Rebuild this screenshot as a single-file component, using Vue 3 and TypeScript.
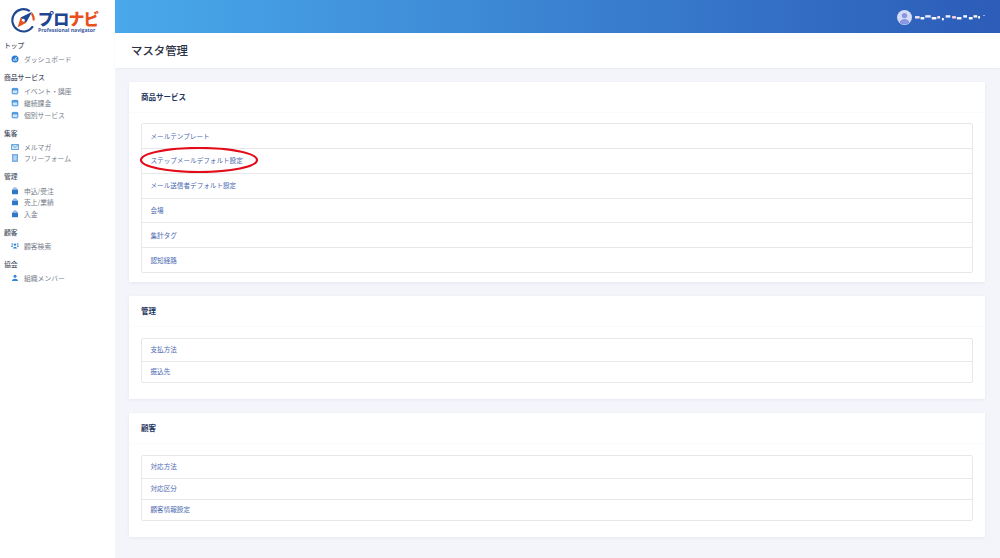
<script setup lang="ts">
type Icon = 'gauge' | 'cal' | 'mail' | 'doc' | 'bag' | 'users' | 'user'
interface NavItem { label: string; icon: Icon }
interface NavGroup { title: string; items: NavItem[] }

const nav: NavGroup[] = [
  { title: 'トップ', items: [{ label: 'ダッシュボード', icon: 'gauge' }] },
  { title: '商品サービス', items: [
    { label: 'イベント・講座', icon: 'cal' },
    { label: '継続課金', icon: 'cal' },
    { label: '個別サービス', icon: 'cal' },
  ] },
  { title: '集客', items: [
    { label: 'メルマガ', icon: 'mail' },
    { label: 'フリーフォーム', icon: 'doc' },
  ] },
  { title: '管理', items: [
    { label: '申込/受注', icon: 'bag' },
    { label: '売上/業績', icon: 'bag' },
    { label: '入金', icon: 'bag' },
  ] },
  { title: '顧客', items: [{ label: '顧客検索', icon: 'users' }] },
  { title: '協会', items: [{ label: '組織メンバー', icon: 'user' }] },
]

const cards = [
  { title: '商品サービス', kind: 'large', links: ['メールテンプレート', 'ステップメールデフォルト設定', 'メール送信者デフォルト設定', '会場', '集計タグ', '認知経路'] },
  { title: '管理', kind: 'small', links: ['支払方法', '振込先'] },
  { title: '顧客', kind: 'small', links: ['対応方法', '対応区分', '顧客情報設定'] },
]

const dashes = [
  [0, 2, 5, '#f4e6ee'], [6, 3, 4, '#ffffff'], [11, 1, 6, '#dfe8ff'], [18, 3, 5, '#ffffff'], [24, 2, 3, '#ffe6ea'],
  [29, 4, 2, '#ffffff'], [33, 1, 5, '#e8f0ff'], [40, 2, 4, '#ffd9e4'], [45, 3, 5, '#ffffff'], [52, 1, 4, '#eaffff'],
  [58, 3, 4, '#ffffff'], [63, 1, 4, '#fff2e0'], [68, 2, 2, '#ffffff'],
] as const
</script>

<template>
  <div class="page">
    <aside class="sidebar">
      <div class="logo">
        <svg class="mark" viewBox="0 0 26 26" width="25" height="25">
          <path d="M19.5 3.2A11.6 11.6 0 1 0 22.8 19" fill="none" stroke="#1f4690" stroke-width="2.2" />
          <path d="M21.6 5.5A11.6 11.6 0 0 1 23.6 13" fill="none" stroke="#e8501e" stroke-width="2.2" />
          <path d="M22 4 15.5 15.5 10 10Z" fill="#1f4690" />
          <path d="M7 20 10 10 15.5 15.5Z" fill="#e8501e" />
          <circle cx="12.8" cy="12.8" r="1.5" fill="#fff" />
        </svg>
        <div class="wordmark">
          <div class="brand">プロ<span class="accent">ナビ</span></div>
          <div class="tagline">Professional navigator</div>
        </div>
      </div>
      <nav class="nav">
        <section v-for="g in nav" :key="g.title" class="group">
          <h3 class="group-title">{{ g.title }}</h3>
          <a v-for="i in g.items" :key="i.label" class="nav-item">
            <svg class="ico" viewBox="0 0 8 8" width="8" height="8">
              <template v-if="i.icon === 'gauge'">
                <circle cx="4" cy="4" r="3.5" fill="#2f7fd0" /><path d="M4 4 5.6 2.2M2 5h4" stroke="#fff" stroke-width=".9" />
              </template>
              <template v-else-if="i.icon === 'cal'">
                <rect x="1.2" y="1.4" width="5.6" height="5.4" rx=".7" fill="#cfe4f7" stroke="#2f86d6" stroke-width=".9" />
                <path d="M1 2.8h6" stroke="#2f86d6" stroke-width="1.1" />
              </template>
              <template v-else-if="i.icon === 'mail'">
                <rect x=".6" y="1.6" width="6.8" height="4.9" fill="#cfe4f7" stroke="#4b93d8" stroke-width=".8" />
                <path d="m1 2 3 2.4L7 2" fill="none" stroke="#4b93d8" stroke-width=".7" />
              </template>
              <template v-else-if="i.icon === 'doc'">
                <rect x="1.3" y=".6" width="5.4" height="6.8" fill="#8fbdec" stroke="#4b93d8" stroke-width=".6" />
                <path d="M2.6 3h2.8M2.6 5h2.8" stroke="#fff" stroke-width=".7" />
              </template>
              <template v-else-if="i.icon === 'bag'">
                <path d="M2.8 2.4V1h2.4v1.4" fill="none" stroke="#2f78c8" stroke-width=".7" />
                <rect x="1" y="2.4" width="6" height="4.8" rx=".4" fill="#2f78c8" />
              </template>
              <template v-else-if="i.icon === 'users'">
                <circle cx="4" cy="2.6" r="1.2" fill="#2f86d6" /><circle cx="1.3" cy="2" r=".9" fill="#6eaee8" /><circle cx="6.7" cy="2" r=".9" fill="#6eaee8" />
                <path d="M2 6.4c0-2 4-2 4 0zM0 4.8c0-1.4 1.6-1.6 2-1v1zM8 4.8c0-1.4-1.6-1.6-2-1v1z" fill="#2f86d6" />
              </template>
              <template v-else>
                <circle cx="4" cy="2.3" r="1.5" fill="#2f86d6" /><path d="M1 7c0-3 6-3 6 0z" fill="#2f86d6" />
              </template>
            </svg>
            <span>{{ i.label }}</span>
          </a>
        </section>
      </nav>
    </aside>

    <div class="main">
      <header class="topbar">
        <div class="account">
          <svg viewBox="0 0 15 15" width="15" height="15" class="avatar">
            <circle cx="7.5" cy="7.5" r="7.5" fill="#d4dcf6" />
            <circle cx="7.5" cy="5.6" r="2.7" fill="#8a96e4" />
            <path d="M2.6 12.8c.6-5 9.2-5 9.8 0a7.5 7.5 0 0 1-9.8 0z" fill="#8a96e4" />
          </svg>
          <svg viewBox="0 0 70 7" width="65" height="7" class="name">
            <rect v-for="d in dashes" :key="d[0]" :x="d[0]" :y="d[1]" :width="d[2]" height="2.6" :fill="d[3]" />
          </svg>
          <span class="caret"></span>
        </div>
      </header>
      <div class="subheader"><h1>マスタ管理</h1></div>
      <main class="content">
        <section v-for="c in cards" :key="c.title" class="card" :class="c.kind">
          <h2 class="card-title">{{ c.title }}</h2>
          <div class="card-body">
            <ul class="list">
              <li v-for="l in c.links" :key="l" class="row">
                <a>{{ l }}</a>
                <svg v-if="l === 'ステップメールデフォルト設定'" class="circle" viewBox="0 0 120 26" width="120" height="26">
                  <ellipse cx="60" cy="13" rx="58" ry="12" fill="none" stroke="#e30b17" stroke-width="2.2" />
                </svg>
              </li>
            </ul>
          </div>
        </section>
      </main>
    </div>
  </div>
</template>

<style>
html, body { margin: 0; background: #f3f5fa; }
</style>

<style scoped>
* { box-sizing: border-box; }
.page {
  display: flex; width: 1000px; height: 558px; overflow: hidden;
  font-family: "Noto Sans CJK JP", "Noto Sans", sans-serif;
  background: #f3f5fa;
}
.sidebar { width: 115px; flex: none; background: #fff; }
.logo { display: flex; align-items: flex-start; gap: 2.5px; height: 37px; padding: 8px 0 0 10.5px; }
.mark { flex: none; }
.wordmark { margin-top: 1px; }
.brand { font: 900 16px/18px "Noto Sans CJK JP", sans-serif; color: #1f4690; letter-spacing: -.8px; white-space: nowrap; }
.accent { color: #e8501e; }
.tagline { font: 700 5.1px/6px "Open Sans", sans-serif; color: #3c5aa0; white-space: nowrap; }
.nav { padding-top: 3px; }
.group { margin-bottom: 7.1px; }
.group-title { margin: 0 0 3.5px 4px; font-size: 6.8px; line-height: 10px; font-weight: 500; color: #4b5266; }
.nav-item { display: flex; align-items: center; height: 11.6px; padding-left: 10.5px; font-size: 6.8px; color: #767c8a; }
.ico { margin-right: 5.5px; flex: none; }
.main { flex: 1; min-width: 0; display: flex; flex-direction: column; }
.topbar {
  height: 33px; flex: none; display: flex; justify-content: flex-end; align-items: center; padding: 1px 15px 0 0;
  background: linear-gradient(90deg, #49a9ea 0%, #2c5cb8 100%);
}
.account { display: flex; align-items: center; }
.avatar { margin-right: 3px; }
.name { display: block; }
.caret { margin-left: 3px; margin-bottom: 3px; border: 1.5px solid transparent; border-top-color: #fff; border-bottom: 0; }
.subheader { height: 35px; flex: none; background: #fff; display: flex; align-items: center; padding: 0 0 2px 16px; box-shadow: 0 1px 2px rgba(60, 70, 110, .06); }
.subheader h1 { margin: 0; font-size: 11.4px; font-weight: 500; color: #2c3244; }
.content { padding: 14px 15px 0 14px; display: flex; flex-direction: column; gap: 14px; }
.card { background: #fff; box-shadow: 0 1px 3px rgba(60, 70, 110, .07); }
.card-title {
  margin: 0; padding: 0 12px; height: 31px; line-height: 30px;
  font-size: 7.5px; font-weight: 700; color: #1f3560; border-bottom: 1px solid #fafbfc;
}
.card-body { padding: 11px 12px 16px; }
.large .card-body { padding: 10px 12px 9.5px; }
.list { margin: 0; padding: 0; list-style: none; border: 1px solid #e6e8ec; border-radius: 2px; }
.row { position: relative; display: flex; align-items: center; padding: 0 0 2px 8.5px; font-size: 6.6px; color: #4a68b0; border-top: 1px solid #e6e8ec; }
.row:first-child { border-top: 0; }
.large .row { height: 24.8px; padding-bottom: 1px; }
.large .row:first-child { height: 24px; }
.small .row { height: 21.4px; }
.circle { position: absolute; left: -3px; top: -2px; }
</style>
